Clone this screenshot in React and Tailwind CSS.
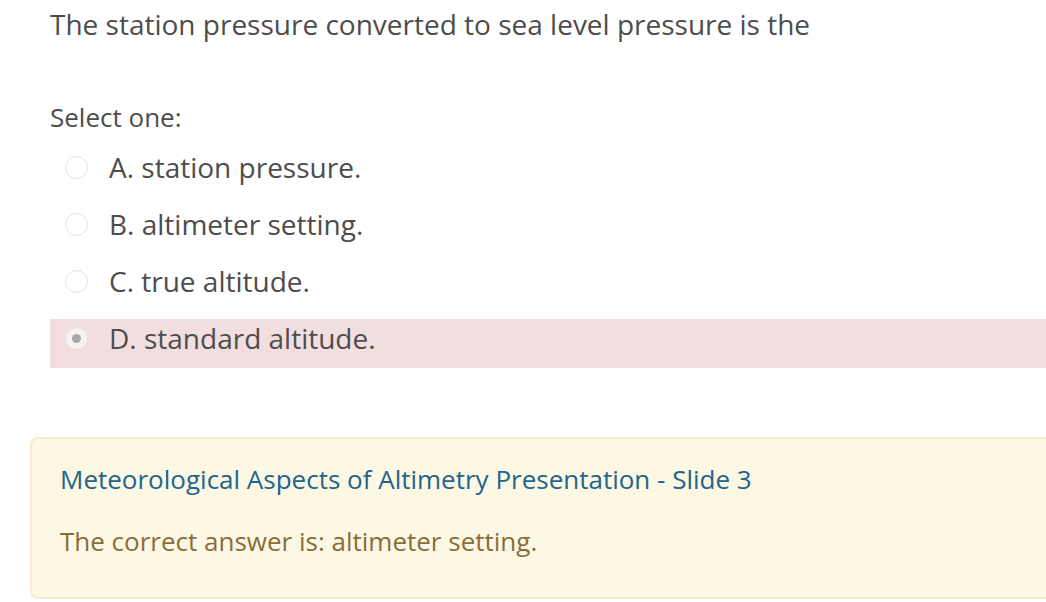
import React from 'react'

const options = [
  { key: 'a', label: 'A. station pressure.', checked: false },
  { key: 'b', label: 'B. altimeter setting.', checked: false },
  { key: 'c', label: 'C. true altitude.', checked: false },
  { key: 'd', label: 'D. standard altitude.', checked: true, incorrect: true },
]

const Radio = ({ checked }) => (
  <span
    className={`flex h-[23px] w-[23px] shrink-0 items-center justify-center rounded-full border border-[#e2e2e2] ${
      checked ? 'bg-[#f7f3f3]' : 'bg-white'
    }`}
  >
    {checked && <span className="h-[9px] w-[9px] rounded-full bg-[#a9a9a9]" />}
  </span>
)

const App = () => {
  return (
    <div className="h-[602px] w-[1046px] overflow-hidden bg-white font-['Open_Sans',sans-serif] text-[#555]">
      <div className="pl-[50px] pt-[3px]">
        <p className="text-[28px] leading-[42px] text-[#4d4d4d]">
          The station pressure converted to sea level pressure is the
        </p>

        <div className="mt-[54px] text-[26px] leading-[36px] text-[#4d4d4d]">Select one:</div>

        <div className="mt-[13px] flex flex-col gap-[8px]">
          {options.map((opt) => (
            <div
              key={opt.key}
              className={`h-[49px] pt-[1px] ${opt.incorrect ? 'bg-[#f2dede]' : ''}`}
            >
              <div className="flex items-center">
                <span className="ml-[15px] mr-[21px] flex items-center">
                  <Radio checked={opt.checked} />
                </span>
                <span className="text-[28px] leading-[36px] text-[#4d4d4d]">{opt.label}</span>
              </div>
            </div>
          ))}
        </div>
      </div>

      <div className="ml-[30px] mr-[-20px] mt-[69px] rounded-[8px] border-2 border-[#faebcc] bg-[#fcf8e3] px-[28px] pt-[20px] pb-[36px]">
        <div className="text-[26px] leading-[40px] text-[#23648f]">
          Meteorological Aspects of Altimetry Presentation - Slide 3
        </div>
        <div className="mt-[22px] text-[26px] leading-[40px] text-[#8a6d3b]">
          The correct answer is: altimeter setting.
        </div>
      </div>
    </div>
  )
}

export default App
